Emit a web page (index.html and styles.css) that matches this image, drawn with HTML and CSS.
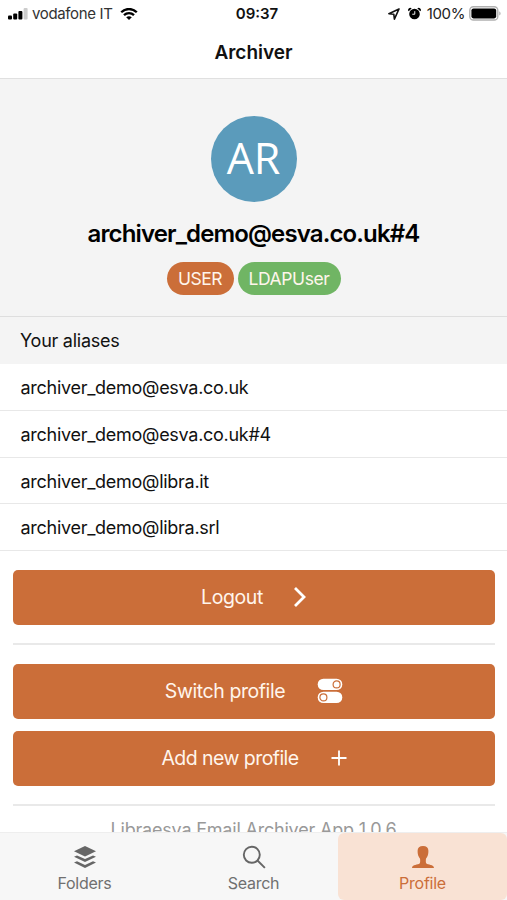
FILE: index.html
```html
<!DOCTYPE html>
<html lang="en">
<head>
<meta charset="utf-8">
<title>Archiver</title>
<link rel="stylesheet" href="styles.css">
</head>
<body>
<div class="app">
  <div class="status">
    <div class="status-left">
      <svg class="signal" width="20" height="12" viewBox="0 0 20 12"><rect x="0" y="7.5" width="4" height="4" rx="1"/><rect x="5.2" y="5.6" width="4" height="5.9" rx="1"/><rect x="10.4" y="3" width="4" height="8.5" rx="1"/><rect x="15.6" y="0" width="4" height="11.5" rx="1" fill="#ccc"/></svg>
      <span class="carrier">vodafone IT</span>
      <svg class="wifi" width="18" height="12" viewBox="0 0 18 12" fill="none" stroke="#000" stroke-width="2.3"><path d="M1.2 4.3C5.6-.1 12.4-.1 16.8 4.3M4 7.2c2.9-2.8 7.1-2.8 10 0"/><path d="M9 12 6.2 9.3c1.7-1.4 3.9-1.4 5.6 0z" fill="#000" stroke="none"/></svg>
    </div>
    <span class="clock">09:37</span>
    <div class="status-right">
      <svg class="location" width="12" height="12" viewBox="0 0 12 12" fill="none" stroke="#111" stroke-width="1.6" stroke-linejoin="round"><path d="M11 1 .9 5.7l4.9.5.6 4.9z"/></svg>
      <svg class="alarm" width="13" height="13" viewBox="0 0 14 13"><circle cx="7" cy="7" r="5.7"/><path d="M.8 4.2A2.3 2.3 0 0 1 4 .9zM13.2 4.2A2.3 2.3 0 0 0 10 .9z"/><path d="M7.3 4v3.3H4.6" fill="none" stroke="#fff" stroke-width="1"/></svg>
      <span class="percent">100%</span>
      <svg class="battery" width="32" height="15" viewBox="0 0 32 15"><rect x=".8" y=".8" width="28" height="13.2" rx="3.6" fill="#fff" stroke="#b0b0b0" stroke-width="1.4"/><rect x="2.4" y="2.4" width="24.8" height="10" rx="2.1"/><path d="M30.3 5.2c1.7.8 1.7 3.6 0 4.4z" fill="#aaa"/></svg>
    </div>
  </div>
  <header class="title">Archiver</header>
  <main class="content">
    <section class="hero">
      <div class="avatar">AR</div>
      <h1 class="account">archiver_demo@esva.co.uk#4</h1>
      <div class="badges"><span class="badge user">USER</span><span class="badge ldap">LDAPUser</span></div>
    </section>
    <h2 class="list-title">Your aliases</h2>
    <ul class="aliases">
      <li>archiver_demo@esva.co.uk</li>
      <li>archiver_demo@esva.co.uk#4</li>
      <li>archiver_demo@libra.it</li>
      <li>archiver_demo@libra.srl</li>
    </ul>
    <div class="actions">
      <button class="action logout"><span>Logout</span><svg width="14" height="22" viewBox="0 0 14 22" fill="none" stroke="#fff" stroke-width="2.8"><path d="m2 2 9 9-9 9"/></svg></button>
      <hr>
      <button class="action switch"><span>Switch profile</span><svg width="26" height="26" viewBox="0 0 26 26"><rect x=".7" y=".7" width="24.6" height="11.4" rx="5.7" fill="#fff"/><rect x=".7" y="13.7" width="24.6" height="11.4" rx="5.7" fill="#fff"/><g fill="none" stroke="#cb6e39" stroke-width="1.2"><circle cx="19.6" cy="6.4" r="3.5"/><circle cx="6.4" cy="19.4" r="3.5"/></g></svg></button>
      <button class="action add"><span>Add new profile</span><svg width="16" height="16" viewBox="0 0 16 16" stroke="#fff" stroke-width="1.8"><path d="M8 .5v15M.5 8h15"/></svg></button>
      <hr>
    </div>
    <p class="version">Libraesva Email Archiver App 1.0.6</p>
  </main>
  <nav class="tabs">
    <a class="tab"><svg width="24" height="24" viewBox="0 0 24 24" fill="#666"><path d="M12 1 23 6.3 12 11.4 1 6.3z"/><path d="m1 11.8 3-1.4 8 3.7 8-3.7 3 1.4-11 5.3z"/><path d="m1 17.6 3-1.4 8 3.7 8-3.7 3 1.4-11 5.3z"/></svg><span class="folders">Folders</span></a>
    <a class="tab"><svg width="24" height="24" viewBox="0 0 24 24" fill="none" stroke="#666" stroke-width="1.9"><circle cx="9.8" cy="9.8" r="8"/><path d="m15.5 15.5 7.4 7.4"/></svg><span class="search">Search</span></a>
    <a class="tab active"><svg width="24" height="24" viewBox="0 0 24 24" fill="#cb6e39"><path d="M12 1C8.500 1 6.600 2.800 6.600 5.800c0 2.200.3 4.400 1.200 6 .5.9 1.200 1.500 1.300 2.400.1 1.700.2 3.500-.5 4.300C7.300 19.900 1 19.300 1 23h22c0-3.700-6.300-3.100-7.600-4.500-.7-.8-.6-2.600-.5-4.300.1-.9.8-1.500 1.300-2.400.9-1.600 1.200-3.800 1.200-6C17.400 2.800 15.500 1 12 1z"/></svg><span class="profile">Profile</span></a>
  </nav>
</div>
</body>
</html>
```
FILE: styles.css
```css
* { box-sizing: border-box; }
body { margin: 0; background: #fff; color: #111; font-family: Inter, "Liberation Sans", sans-serif; }
.app { height: 900px; display: flex; flex-direction: column; overflow: hidden; }
.status { height: 28px; flex: none; display: grid; grid-template-columns: 1fr auto 1fr; align-items: center; padding: 0 6px 0 8px; font-size: 15px; line-height: 28px; }
.status-left, .status-right { display: flex; align-items: center; }
.status-right { justify-content: flex-end; }
.carrier { margin: 0 7px 0 4px; color: #333; letter-spacing: -.35px; }
.wifi, .battery { margin-top: -1px; }
.clock { margin-left: 5px; font-weight: 600; letter-spacing: 0; }
.location, .alarm { margin-top: -1px; }
.alarm { margin-right: 6px; margin-left: 8px; }
.percent { margin-right: 4px; color: #222; letter-spacing: -.4px; }
.title { height: 51px; flex: none; border-bottom: 1px solid #e0e0e0; text-align: center; font-size: 19px; font-weight: 600; line-height: 49px; }
.content { flex: 1; min-height: 0; overflow: hidden; }
.hero { height: 238px; background: #f4f4f4; border-bottom: 1px solid #dedede; padding-top: 37px; display: flex; flex-direction: column; align-items: center; }
.avatar { width: 86px; height: 86px; flex: none; border-radius: 50%; background: #5b9bbb; color: #fff; font: 43px/84px "Open Sans", sans-serif; text-align: center; }
.account { margin: 17px 0 13px; color: #000; font-size: 24px; line-height: 30px; font-weight: 600; letter-spacing: -.87px; white-space: nowrap; }
.badges { display: flex; gap: 4px; }
.badge { height: 33px; border-radius: 17px; color: #fff5ec; font-size: 17.5px; line-height: 34px; text-align: center; }
.user { width: 67px; background: #cb6e39; letter-spacing: -.5px; }
.ldap { width: 103px; background: #70b564; letter-spacing: -.4px; }
.list-title { height: 47px; margin: 0; padding-left: 20px; background: #f4f4f4; font-size: 18px; line-height: 48px; font-weight: 400; letter-spacing: -.25px; }
.aliases { margin: 0; padding: 0; list-style: none; }
.aliases li { height: 46.8px; padding-left: 20.5px; border-bottom: 1px solid #e8e8e8; font-size: 18px; line-height: 47px; letter-spacing: -.28px; }
.actions { padding: 18.8px 12px 0 13px; }
.action { display: flex; width: 100%; height: 55px; padding: 0; border: 0; border-radius: 5px; align-items: center; justify-content: center; background: #cb6e39; color: #fff5ec; font: 19.5px Inter, sans-serif; letter-spacing: -.42px; }
.logout svg { margin-left: 30px; }
.switch svg { margin-left: 32px; }
.add { margin-top: 12px; letter-spacing: -.55px; }
.add svg { margin-left: 32px; }
hr { height: 2px; margin: 18px 0 19px; border: 0; background: #e9e9e9; }
.version { margin: -7px 0 0; text-align: center; color: #999; font-size: 18px; line-height: 24px; letter-spacing: -.2px; white-space: nowrap; }
.tabs { height: 68px; flex: none; display: grid; grid-template-columns: 1fr 1fr 1fr; background: #f7f7f7; border-top: 1px solid #eee; }
.tab { display: flex; flex-direction: column; align-items: center; padding-top: 12px; color: #707070; font-size: 16px; line-height: 20px; letter-spacing: -.25px; }
.tab span { margin-top: 4px; }
.active { background: #f9e2d4; color: #cb6e39; border-radius: 6px; }
```
